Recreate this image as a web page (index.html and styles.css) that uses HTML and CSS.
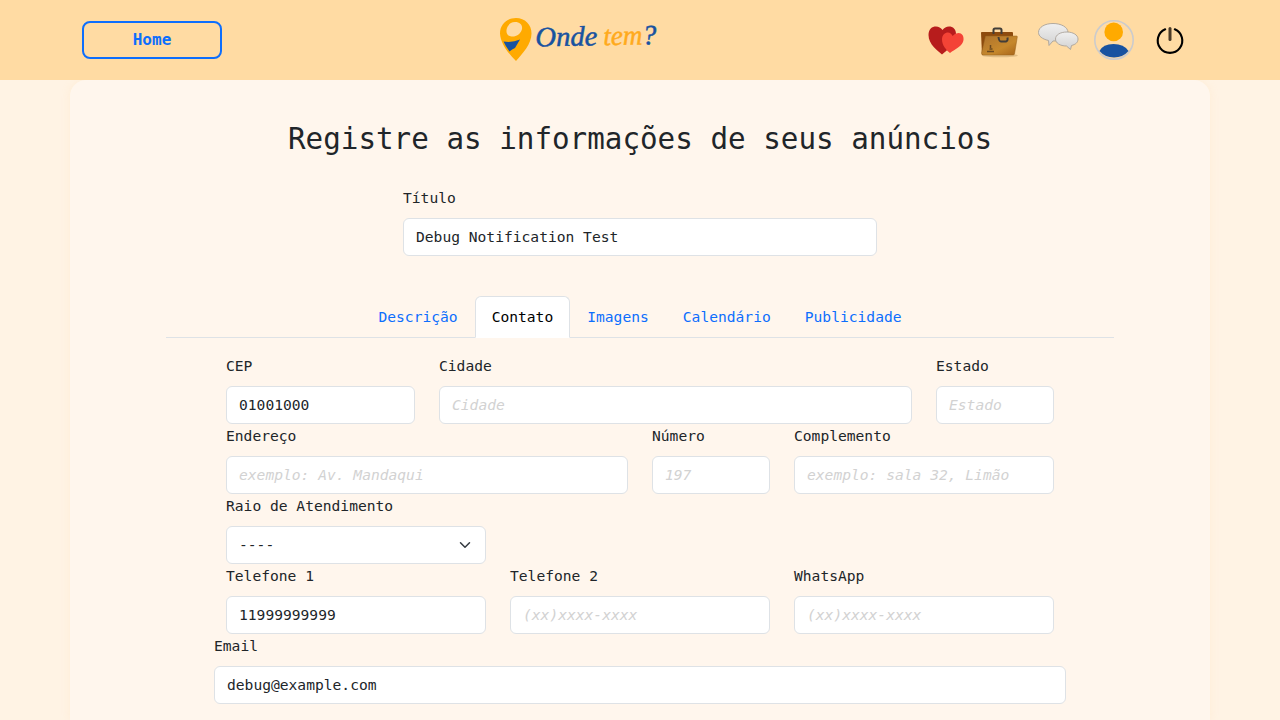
FILE: index.html
```html
<!DOCTYPE html>
<html lang="pt-BR">
<head>
<meta charset="utf-8">
<title>Onde Tem?</title>
<link rel="stylesheet" href="styles.css">
</head>
<body>
<header class="topbar">
  <a class="home" href="#">Home</a>
  <svg class="logo" width="160" height="50" viewBox="0 0 160 50">
    <path fill="#ffaa00" fill-rule="evenodd" d="M16 3C7 3 0 9.500 0 18.500C.5 29 9 39 16 46C23 38 31.500 29 31.500 18.500C31.500 9.500 25 3 16 3ZM15 7C20.500 7 23 10.500 21.800 14.800C20.300 19.500 16 22 11.500 21.500C7 21 5.500 17 7 13C8.300 9.500 11 7 15 7Z"/>
    <path fill="#1852a0" d="M3.500 26.500Q12 28 20 24.500L15 33Q12 34 9.500 36.500Q5.500 31 3.500 26.500Z"/>
    <g class="logo-text">
      <text x="35" y="32" textLength="62" lengthAdjust="spacingAndGlyphs" fill="#1852a0" stroke="#1852a0">Onde</text>
      <text x="103" y="32" textLength="39" lengthAdjust="spacingAndGlyphs" fill="#ffaa1c" stroke="#ffaa1c">tem</text>
      <text x="142" y="32" textLength="14" lengthAdjust="spacingAndGlyphs" fill="#1852a0" stroke="#1852a0">?</text>
    </g>
  </svg>
  <nav class="actions">
    <svg width="40" height="40" viewBox="0 0 40 40">
      <path fill="#b71c1c" d="M17 34.500C13 31 3.500 24.500 3.500 15C3.500 9 7 6.500 11 6.500Q15 6.500 17.500 10Q20 6.500 24 6.500C28 6.500 31 9 31 14C31 24 21 31 17 34.500Z"/>
      <path fill="#f44336" d="M25 33C21 30 17 25 17 19.500C17 15 20 12.500 23 12.500Q26 12.500 27.500 16Q30 13 33.500 13C37 13 39 16 38.500 20C38 26 30 29 25 33Z"/>
    </svg>
    <svg class="bag" width="40" height="40" viewBox="0 0 40 40">
      <defs><linearGradient id="bag" x1="0" y1="0" x2="1" y2="1"><stop offset="0" stop-color="#ae732d"/><stop offset=".6" stop-color="#c6882c"/><stop offset="1" stop-color="#a76319"/></linearGradient></defs>
      <ellipse cx="21" cy="35.500" rx="18" ry="1.800" fill="#bd965e" opacity=".45"/>
      <path fill="#8e4b0d" d="M2 12.500Q2 12 3 12H33Q34 12 34 13V32L3 35Z"/>
      <path d="M14.500 14V10Q14.500 8.500 16 8.500H21Q22.500 8.500 22.500 10V14" fill="none" stroke="#413d38" stroke-width="2"/>
      <path fill="url(#bag)" stroke="#96601c" stroke-width=".5" d="M6.500 16H37.500Q38.500 16 38.300 17L35.500 34Q35.300 35 34 35H4Q2.500 35 2.500 33Z"/>
      <path d="M19.500 17Q20 21.500 22 21.500H27Q29 21 28.500 17.500" fill="none" stroke="#413d38" stroke-width="2"/>
      <path d="M11.500 25V28M10.500 29H13.500M8 31.500H15" fill="none" stroke="#6b491f" stroke-width="1.500"/>
    </svg>
    <svg width="42" height="40" viewBox="0 0 42 40">
      <defs><linearGradient id="bubble" x1="0" y1="0" x2="0" y2="1"><stop offset="0" stop-color="#f0f0f0"/><stop offset="1" stop-color="#d2d2d2"/></linearGradient></defs>
      <g fill="url(#bubble)" stroke="#aaa39a" stroke-width=".9">
        <path d="M16 3.500C24 3.500 31 7 31 12.500S25 21 16 21L12 25.500L11.500 20.500C5 19 1.500 16 1.500 12.500C1.500 7 8 3.500 16 3.500Z"/>
        <path d="M30 12C36 12 41 15 41 19C41 22.500 38.500 24.500 34.500 25.500L33.500 29.500L29.500 26C23 26 18.500 23 18.500 19S23 12 30 12Z"/>
      </g>
    </svg>
    <svg class="user" width="40" height="40" viewBox="0 0 40 40">
      <circle cx="20" cy="20" r="19.200" fill="#ffdba5" stroke="#cbcbcd" stroke-width="1.600"/>
      <circle cx="19.700" cy="11.900" r="9.300" fill="#ffaa00"/>
      <path fill="#1852a0" d="M5.500 31Q9 24 19.500 24T34.500 31Q29 37.500 20 37.500T5.500 31Z"/>
    </svg>
    <svg width="40" height="40" viewBox="0 0 40 40" fill="none" stroke-linecap="round">
      <path d="M15.200 9.300A12.300 12.300 0 1 0 24.800 9.300" stroke="#000" stroke-width="2.100"/>
      <path d="M20 8.500V19.500" stroke="#4b3b28" stroke-width="3"/>
    </svg>
  </nav>
</header>
<main class="panel">
  <h1>Registre as informações de seus anúncios</h1>
  <div class="field title-field"><label for="titulo">Título</label><input id="titulo" value="Debug Notification Test"></div>
  <nav class="tabs">
    <a href="#">Descrição</a><a class="active" href="#">Contato</a><a href="#">Imagens</a><a href="#">Calendário</a><a href="#">Publicidade</a>
  </nav>
  <form class="contact">
    <div class="grid">
      <div class="field c3"><label for="cep">CEP</label><input id="cep" value="01001000"></div>
      <div class="field c7"><label for="cidade">Cidade</label><input id="cidade" placeholder="Cidade"></div>
      <div class="field c2"><label for="estado">Estado</label><input id="estado" placeholder="Estado"></div>
      <div class="field c6"><label for="end">Endereço</label><input id="end" placeholder="exemplo: Av. Mandaqui"></div>
      <div class="field c2"><label for="num">Número</label><input id="num" placeholder="197"></div>
      <div class="field c4"><label for="comp">Complemento</label><input id="comp" placeholder="exemplo: sala 32, Limão"></div>
      <div class="field c4"><label for="raio">Raio de Atendimento</label>
        <div class="select"><select id="raio"><option>----</option></select>
          <svg width="16" height="12" viewBox="0 0 16 16"><path d="m2 5 6 6 6-6" fill="none" stroke="#343a40" stroke-width="2" stroke-linecap="round" stroke-linejoin="round"/></svg>
        </div>
      </div>
      <div class="field c4 first"><label for="t1">Telefone 1</label><input id="t1" value="11999999999"></div>
      <div class="field c4"><label for="t2">Telefone 2</label><input id="t2" placeholder="(xx)xxxx-xxxx"></div>
      <div class="field c4"><label for="wa">WhatsApp</label><input id="wa" placeholder="(xx)xxxx-xxxx"></div>
    </div>
    <div class="field"><label for="email">Email</label><input id="email" value="debug@example.com"></div>
  </form>
</main>
</body>
</html>
```
FILE: styles.css
```css
* { box-sizing: border-box; }
body {
  margin: 0;
  height: 720px;
  background: #fff3e4;
  color: #212529;
  font: 14.62px/24px "DejaVu Sans Mono", monospace;
}
a { color: #0d6efd; text-decoration: none; }
.topbar {
  position: relative;
  z-index: 1;
  height: 80px;
  padding: 0 90px 0 82px;
  background: #ffdba3;
  display: grid;
  grid-template-columns: 418px 160px 1fr;
  align-items: center;
}
.home {
  width: 140px;
  height: 38px;
  border: 2px solid #0d6efd;
  border-radius: 8px;
  font-size: 16px;
  font-weight: bold;
  line-height: 34px;
  text-align: center;
}
.logo-text {
  font: italic 28px "Liberation Serif", serif;
  stroke-width: .5;
  transform: rotate(-1deg);
}
.actions { display: flex; gap: 14px; justify-content: flex-end; }
.actions svg:last-child { margin-left: 2px; }
.actions .bag { margin-right: 4px; }
.actions .user { margin-left: 1px; }
.panel {
  width: 1140px;
  height: 640px;
  margin: 0 auto;
  padding: 40px 96px 0;
  border-radius: 16px 16px 0 0;
  background: #fff6ed;
  box-shadow: 0 0 8px rgba(255, 219, 163, .22);
}
h1 {
  margin: 0 0 28px;
  font-size: 29.24px;
  font-weight: normal;
  line-height: 38px;
  text-align: center;
}
.field { display: flex; flex-direction: column; gap: 8px; min-width: 0; }
.title-field { width: 474px; margin: 0 auto 40px; }
label { height: 24px; }
input, select {
  width: 100%;
  height: 38px;
  padding: 5px 12px 7px;
  border: 1px solid #dee2e6;
  border-radius: 6px;
  background: #fff;
  color: #212529;
  font: inherit;
  appearance: none;
}
select { padding: 6px 12px; }
input::placeholder { color: #d2d2d2; opacity: 1; font-style: italic; }
.select { position: relative; height: 38px; }
.select svg { position: absolute; right: 13px; top: 13px; }
.tabs {
  display: flex;
  justify-content: center;
  height: 42px;
  border-bottom: 1px solid #dee2e6;
}
.tabs a {
  height: 42px;
  padding: 8px 16px;
  border: 1px solid transparent;
  border-radius: 6px 6px 0 0;
}
.tabs .active {
  color: #000;
  background: #fff;
  border-color: #dee2e6 #dee2e6 #fff;
}
.contact { width: 852px; margin: 16px auto 0; }
.grid {
  display: grid;
  grid-template-columns: repeat(12, 47px);
  column-gap: 24px;
  padding: 0 12px;
}
.c2 { grid-column: span 2; }
.c3 { grid-column: span 3; }
.c4 { grid-column: span 4; }
.c6 { grid-column: span 6; }
.c7 { grid-column: span 7; }
.first { grid-column: 1 / span 4; }
```
